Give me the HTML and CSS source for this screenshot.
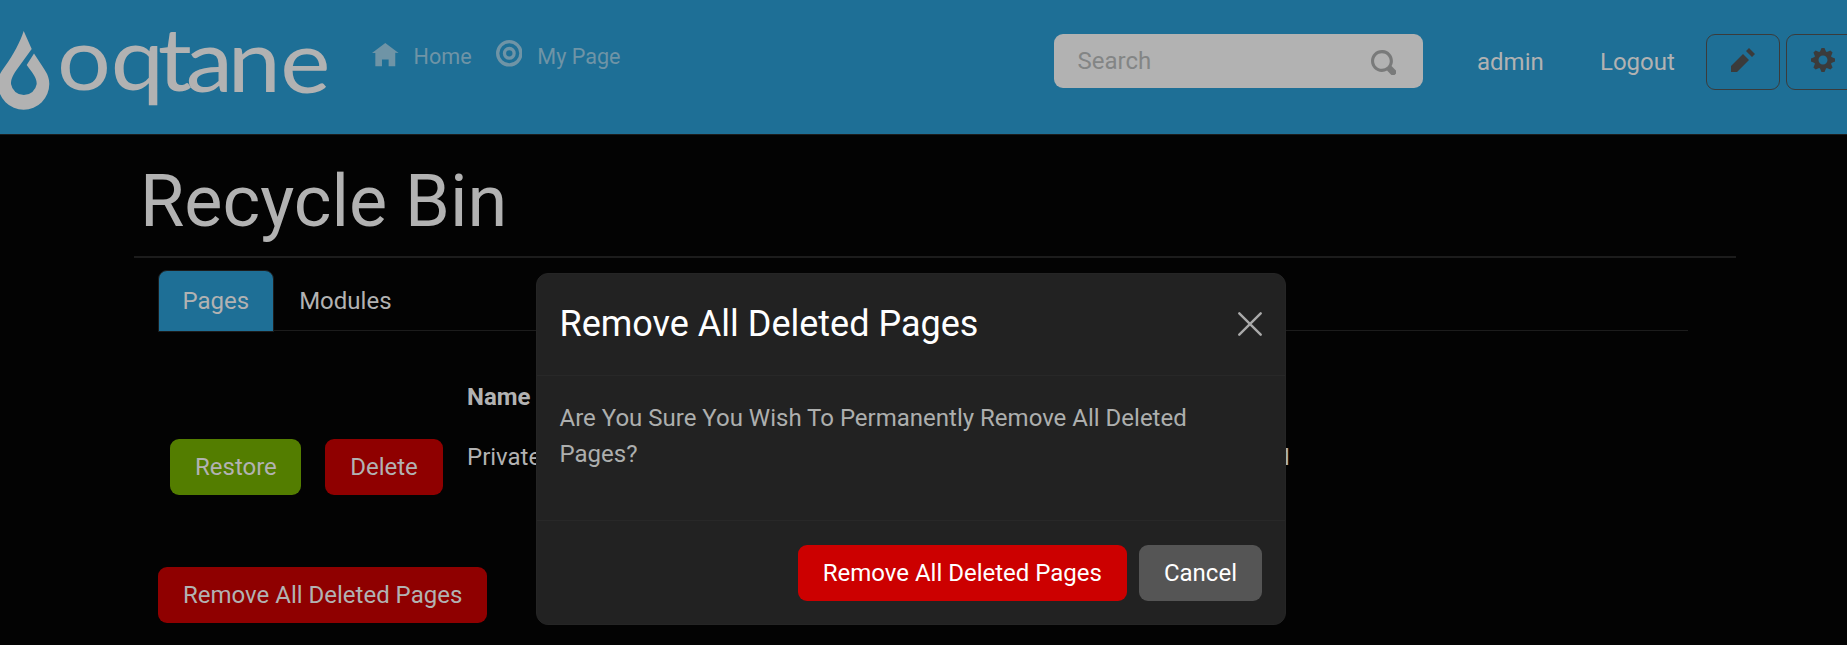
FILE: index.html
```html
<!DOCTYPE html>
<html lang="en">
<head>
<meta charset="utf-8">
<title>Recycle Bin</title>
<link rel="stylesheet" href="styles.css">
</head>
<body>
<header class="topbar">
  <svg class="logo" width="340" height="134" viewBox="0 0 340 134" role="img">
    <path d="M23.7 31 L31.7 49 L16.5 70 C12.5 76 11 79 11 84 A13 13 0 0 0 36.7 84 C36.7 78 34 75 26.7 65 L34 53.5 L43.5 68 C47.5 74 49.3 78 49.3 84 A25.5 25.5 0 0 1 -2 84 C-2 77 0 73 4.5 67 C14 54 20 42 23.7 31Z"/>
    <text class="wordmark" transform="scale(1.08 1)" x="52.7 102.6 146 172 211 259.5" y="90 90.5 91 92 92.5 93.5">oqtane</text>
  </svg>
  <nav class="menu">
    <a class="menu-link"><svg class="oi-menu" viewBox="0 0 8 8"><path d="M4 0l-4 3h1v4h2v-2h2v2h2v-4.03l1 .03-4-3z"/></svg><span>Home</span></a>
    <a class="menu-link page-link"><svg class="oi-menu target" viewBox="0 0 8 8"><circle cx="4" cy="4" r="3.5"/><circle cx="4" cy="4" r="1.45"/></svg><span>My Page</span></a>
  </nav>
  <div class="controls">
    <div class="search"><span>Search</span><svg class="oi" viewBox="0 0 8 8"><path d="M3.5 0c-1.93 0-3.5 1.57-3.5 3.5s1.57 3.5 3.5 3.5c.59 0 1.17-.14 1.66-.41a1 1 0 0 0 .13.13l1 1a1.02 1.02 0 1 0 1.44-1.44l-1-1a1 1 0 0 0-.16-.13c.27-.49.44-1.06.44-1.66 0-1.93-1.55-3.5-3.5-3.5zm0 1c1.39 0 2.5 1.11 2.5 2.5 0 .66-.24 1.27-.66 1.72-.01.01-.02.02-.03.03a1 1 0 0 0-.13.13c-.44.4-1.04.63-1.69.63-1.39 0-2.5-1.11-2.5-2.5s1.11-2.5 2.5-2.5z"/></svg></div>
    <a class="user">admin</a>
    <a class="logout">Logout</a>
    <div class="tool"><svg class="oi" viewBox="0 0 8 8"><path d="M6 0l-1 1 2 2 1-1-2-2zm-2 2l-4 4v2h2l4-4-2-2z"/></svg></div>
    <div class="tool"><svg class="oi" viewBox="0 0 8 8"><path d="M3.5 0l-.5 1.19c-.1.03-.19.08-.28.13l-1.19-.5-.72.72.5 1.19c-.05.1-.09.18-.13.28l-1.19.5v1l1.19.5c.04.1.08.18.13.28l-.5 1.19.72.72 1.19-.5c.09.04.18.09.28.13l.5 1.19h1l.5-1.19c.09-.04.19-.08.28-.13l1.19.5.72-.72-.5-1.19c.04-.09.09-.19.13-.28l1.19-.5v-1l-1.19-.5c-.03-.09-.08-.19-.13-.28l.5-1.19-.72-.72-1.19.5c-.09-.04-.19-.09-.28-.13l-.5-1.19h-1zm.5 2.5c.83 0 1.5.67 1.5 1.5s-.67 1.5-1.5 1.5-1.5-.67-1.5-1.5.67-1.5 1.5-1.5z"/></svg></div>
  </div>
</header>
<main class="content">
  <h1 class="title">Recycle Bin</h1>
  <section class="panel">
    <div class="tabs"><a class="tab active">Pages</a><a class="tab">Modules</a></div>
    <div class="grid">
      <span></span><span></span><strong>Name</strong><span></span>
      <button class="btn restore">Restore</button>
      <button class="btn delete">Delete</button>
      <span>Private</span>
      <span class="time">PM</span>
    </div>
    <button class="btn delete">Remove All Deleted Pages</button>
  </section>
</main>
<div class="modal">
  <div class="modal-header">
    <h5 class="modal-title">Remove All Deleted Pages</h5>
    <svg class="close" viewBox="0 0 24 24"><path d="M1.3 1.3L22.7 22.7M22.7 1.3L1.3 22.7"/></svg>
  </div>
  <div class="modal-body">Are You Sure You Wish To Permanently Remove All Deleted Pages?</div>
  <div class="modal-footer">
    <button class="btn danger">Remove All Deleted Pages</button>
    <button class="btn cancel">Cancel</button>
  </div>
</div>
</body>
</html>
```
FILE: styles.css
```css
* { box-sizing: border-box; }
body {
  margin: 0;
  height: 645px;
  overflow: hidden;
  position: relative;
  background: #030303;
  color: #b2b2b2;
  font: 24px/36px Roboto, "Liberation Sans", sans-serif;
}
svg { display: block; flex: none; }
.topbar {
  display: flex;
  align-items: flex-start;
  height: 135px;
  background: #1e6f96;
  border-bottom: 1px solid #1c1c1c;
  overflow: hidden;
}
.logo { fill: #b2b2b2; }
.wordmark { font: 88px Lato, sans-serif; }
.menu {
  display: flex;
  flex: none;
  padding: 38px 0 0 32px;
  width: 714px;
  font-size: 21.6px;
  line-height: 38px;
  color: #6f94a6;
}
.menu-link { display: flex; gap: 15px; }
.page-link { margin-left: 24px; }
.oi-menu { width: 26.6px; height: 26.6px; margin-top: 5px; fill: currentColor; }
.target { margin-top: 2px; fill: none; stroke: currentColor; }
.controls { display: flex; flex: none; padding-top: 34px; }
.search {
  display: flex;
  justify-content: space-between;
  width: 369px;
  height: 54px;
  padding: 9px 27px 9px 23.5px;
  border-radius: 9px;
  background: #b2b2b2;
  color: #838585;
}
.oi { width: 24px; height: 24px; fill: currentColor; }
.search .oi { margin: 7px 0 0; width: 25px; height: 25px; color: #797a7a; }
.user { width: 123px; margin-left: 54px; padding-top: 10px; }
.logout { width: 106px; padding-top: 10px; }
.tool {
  width: 74px;
  height: 56px;
  margin-right: 6px;
  padding: 13px 24px;
  border: 1px solid #3b3b3b;
  border-radius: 9px;
  color: #3b3b3b;
}
.content { width: 1602px; margin-left: 134px; padding-top: 24px; }
.title {
  height: 99px;
  margin: 0;
  padding-left: 6px;
  border-bottom: 2px solid #1c1c1c;
  font: 400 72px/86px Roboto, sans-serif;
}
.panel { padding: 12px 48px 0 24px; }
.tabs { display: flex; gap: 1px; height: 61px; border-bottom: 1px solid #1c1c1c; }
.tab { height: 62px; padding: 12px 23.5px; border: 1px solid transparent; border-radius: 9px 9px 0 0; }
.active { background: #1e6f96; border-color: #1c1c1c; }
.grid {
  display: grid;
  grid-template-columns: 131px 118px 600px 226px;
  grid-template-rows: 36px 56px;
  column-gap: 24px;
  row-gap: 24px;
  padding: 48px 0 72px 12px;
}
.time { text-align: right; margin-right: 27px; }
.btn {
  height: 56px;
  padding: 9px 24px;
  border: 1px solid transparent;
  border-radius: 9px;
  color: #b2b2b2;
  font: inherit;
  white-space: nowrap;
}
.restore { background: #537d00; }
.delete { background: #8f0000; }
.modal {
  position: absolute;
  left: 536px;
  top: 273px;
  width: 750px;
  height: 352px;
  border: 1px solid #252525;
  border-radius: 12px;
  background: #222;
}
.modal-header {
  display: flex;
  justify-content: space-between;
  align-items: center;
  height: 102px;
  padding: 0 23px 2px 22.5px;
  border-bottom: 1px solid #282828;
}
.modal-title { margin: 0; font: 400 36px/54px Roboto, sans-serif; color: #fff; }
.close { width: 24px; height: 24px; fill: none; stroke: #a9a9a9; stroke-width: 2.4; stroke-linecap: round; }
.modal-body { height: 144px; padding: 24px 23px 24px 22.5px; color: #adafae; }
.modal-footer {
  display: flex;
  justify-content: flex-end;
  gap: 12px;
  padding: 24px 23px;
  border-top: 1px solid #282828;
}
.danger { background: #c00; color: #fff; }
.cancel { background: #555; color: #fff; }
```
